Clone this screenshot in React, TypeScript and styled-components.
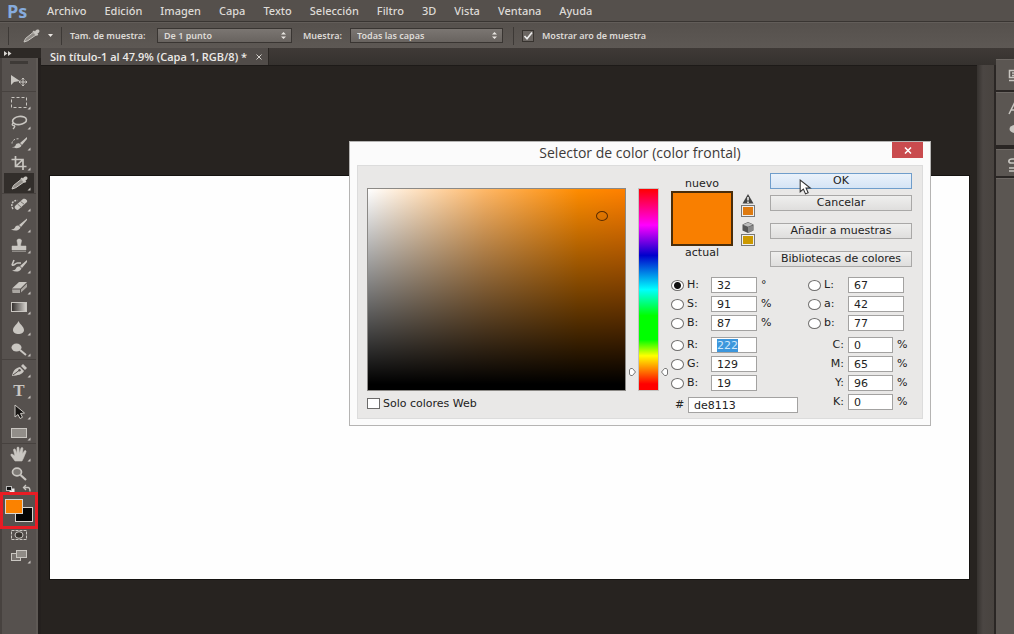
import React, { useEffect, useRef } from "react";
import styled, { createGlobalStyle, css } from "styled-components";

const ui = `"Noto Sans", "Open Sans", sans-serif`;
const titleFont = `"Open Sans", "Noto Sans", sans-serif`;
const dialogFont = `"DejaVu Sans", sans-serif`;

const GlobalStyle = createGlobalStyle`
  *, *::before, *::after { box-sizing: border-box; }
  body { margin: 0; background: #272320; }
  button, input, select { font: inherit; color: inherit; margin: 0; }
`;

const Screen = styled.div`
  position: relative;
  display: flex;
  flex-direction: column;
  min-height: 100vh;
  font-family: ${ui};
  color: #dedbd7;
  overflow: hidden;
`;

/* ---------- menu bar ---------- */

const MenuBar = styled.nav`
  display: flex;
  align-items: center;
  height: 22px;
  padding-left: 7px;
  background: #55504c;
  border-bottom: 1px solid #393532;
`;

const Logo = styled.span`
  width: 40px;
  font: 700 18px/20px ${titleFont};
  color: #86abdc;
`;

const MenuItems = styled.div`
  display: flex;
  gap: 18px;
`;

const MenuItem = styled.button`
  padding: 0;
  border: 0;
  background: none;
  font-size: 11px;
  font-weight: 500;
  line-height: 20px;
`;

/* ---------- options bar ---------- */

const OptionsBar = styled.div`
  display: flex;
  align-items: center;
  height: 26px;
  padding-left: 8px;
  background: linear-gradient(#56514d, #5d5854);
  border-top: 1px solid #625d59;
  font-size: 9px;
  font-weight: 600;
`;

const Divider = styled.span`
  width: 1px;
  height: 18px;
  background: #3d3936;
`;

const ToolPreset = styled.button`
  display: flex;
  align-items: center;
  gap: 8px;
  width: 52px;
  padding: 0 0 0 14px;
  border: 0;
  background: none;
`;

const OptionLabel = styled.label<{ $width: number }>`
  width: ${(p) => p.$width}px;
  padding-left: 8px;
  white-space: nowrap;
`;

const SelectBox = styled.span<{ $width: number }>`
  display: flex;
  align-items: center;
  width: ${(p) => p.$width}px;
  height: 15px;
  margin-right: 3px;
  padding-right: 4px;
  border: 1px solid #393532;
  background: linear-gradient(#7b7672, #68635f);
  select {
    flex: 1;
    min-width: 0;
    padding: 0 0 0 6px;
    border: 0;
    appearance: none;
    background: none;
    line-height: 12px;
  }
`;

const CheckOption = styled.label`
  display: flex;
  align-items: center;
  gap: 8px;
  padding-left: 7px;
`;

const DarkCheck = styled.input`
  appearance: none;
  width: 12px;
  height: 12px;
  border: 1px solid #37332f;
  background: #6b6662
    url("data:image/svg+xml,%3Csvg xmlns='http://www.w3.org/2000/svg' viewBox='0 0 10 10'%3E%3Cpath d='M1.5 5 4 7.8 9 1.5' fill='none' stroke='%23eee' stroke-width='1.6'/%3E%3C/svg%3E");
`;

/* ---------- work area ---------- */

const WorkArea = styled.div`
  flex: 1;
  display: flex;
`;

const ToolColumn = styled.aside`
  display: flex;
  flex-direction: column;
  width: 41px;
  background: #24201e;
`;

const Collapse = styled.button`
  display: block;
  height: 10px;
  padding: 0 0 0 4px;
  border: 0;
  background: #2d2926;
  svg { display: block; }
`;

const ToolPanel = styled.div`
  flex: 1;
  display: flex;
  flex-direction: column;
  width: 38px;
  background: #56514e;
  border-left: 2px solid #47423f;
  border-right: 2px solid #5e5955;
`;

const Grip = styled.div`
  height: 12px;
  padding: 3px 8px 0;
  &::before {
    content: "";
    display: block;
    height: 3px;
    background: #3e3a37;
  }
`;

const ToolGroup = styled.div<{ $height: number }>`
  display: flex;
  flex-direction: column;
  height: ${(p) => p.$height}px;
  & + & { border-top: 1px solid #47423f; }
`;

const ViewGroup = styled.div`
  display: flex;
  flex-direction: column;
  height: 42px;
  margin-top: -5px;
`;

const ToolButton = styled.button<{ $active?: boolean }>`
  flex: 1;
  display: flex;
  align-items: center;
  min-height: 0;
  margin: 0 2px;
  padding: 0 0 0 5px;
  border: 0;
  background: ${(p) => (p.$active ? "#322e2b" : "none")};
  svg { display: block; }
`;

const SwapRow = styled.div`
  display: flex;
  height: 8px;
  padding-left: 2px;
`;

const ColorFrame = styled.div`
  position: relative;
  width: 38px;
  height: 37px;
  margin-left: -2px;
  border: 3px solid #e81c24;
`;

const ColorChip = styled.button<{ $color: string; $back?: boolean }>`
  position: absolute;
  left: ${(p) => (p.$back ? 12 : 2)}px;
  top: ${(p) => (p.$back ? 12 : 4)}px;
  width: 18px;
  height: 15px;
  padding: 0;
  border: 1px solid #d9d5d0;
  background: ${(p) => p.$color};
`;

const Workspace = styled.main`
  flex: 1;
  display: flex;
  flex-direction: column;
  min-width: 0;
`;

const TabBar = styled.div`
  display: flex;
  height: 17px;
  background: linear-gradient(#3f3a37, #35312e);
`;

const Tab = styled.div`
  display: flex;
  align-items: center;
  gap: 9px;
  padding: 0 6px 0 9px;
  background: #514c49;
  border-right: 1px solid #2a2623;
  color: #eceae7;
  font: 600 11px/16px ${titleFont};
  white-space: nowrap;
`;

const TabClose = styled.button`
  padding: 0;
  border: 0;
  background: none;
  svg { display: block; }
`;

const Pasteboard = styled.div`
  flex: 1;
  display: flex;
  padding: 110px 8px 55px 9px;
  background: #272320;
  border-top: 1px solid #1d1a18;
`;

const Canvas = styled.div`
  flex: 1;
  background: #fefefe;
  outline: 1px solid #151311;
`;

const SideColumn = styled.aside`
  display: grid;
  grid-template-columns: 17px 18px;
  grid-template-rows: 17px 1fr;
  column-gap: 2px;
  background: #2a2624;
`;

const SideHead = styled.div`
  grid-column: 1 / -1;
  background: linear-gradient(#3f3a37, #35312e);
`;

const ScrollTrack = styled.div`
  background: linear-gradient(90deg, #36322f, #4b4643 6px, #48433f);
`;

const Panels = styled.div`
  display: flex;
  flex-direction: column;
  gap: 2px;
  margin-top: -6px;
`;

const PanelCard = styled.div<{ $height?: number; $gap?: number }>`
  ${(p) => (p.$height ? `height: ${p.$height}px;` : "flex: 1;")}
  margin-top: ${(p) => p.$gap || 0}px;
  padding: 8px 0 0 12px;
  background: #5b5652;
  border-top: 1px solid #6d6864;
  overflow: hidden;
  svg { display: block; }
`;

/* ---------- colour picker dialog ---------- */

const Dialog = styled.section`
  position: absolute;
  left: 349px;
  top: 141px;
  width: 582px;
  padding: 0 7px 6px;
  border: 1px solid #b5b4b3;
  background: #fbfbfb;
  color: #222;
  font-family: ${dialogFont};
  font-size: 11px;
  line-height: 14px;
`;

const TitleBar = styled.header`
  display: grid;
  grid-template-columns: 31px 1fr 31px;
  height: 23px;
  h1 {
    grid-column: 2;
    margin: 0;
    font: 400 14px/22px ${titleFont};
    text-align: center;
    color: #3d3a38;
  }
`;

const CloseButton = styled.button`
  display: grid;
  place-items: center;
  width: 31px;
  height: 16px;
  padding: 0;
  border: 0;
  background: #c94b4e;
`;

const DialogBody = styled.div`
  display: flex;
  gap: 12px;
  padding: 7px 10px 2px 9px;
  border: 1px solid #dcdcdc;
  background: #e9e8e7;
`;

const PickerColumn = styled.div`
  flex: 1;
  padding-top: 15px;
`;

const PickerRow = styled.div`
  display: flex;
  gap: 12px;
  height: 203px;
`;

const ShadeField = styled.div`
  position: relative;
  flex: 1;
  border: 1px solid #8b8986;
  background: linear-gradient(to top, #000 3%, transparent),
    linear-gradient(to right, #fff, #ffb868 45%, #ff8c00 82%, #ff8000);
`;

const ShadeMarker = styled.span`
  position: absolute;
  left: 228px;
  top: 22px;
  width: 12px;
  height: 10px;
  border: 1px solid #5a2c00;
  border-radius: 50%;
`;

const HueBar = styled.div`
  position: relative;
  width: 21px;
  border: 1px solid #c5c3c1;
  background: linear-gradient(#f00, #f0f 18%, #00c 33%, #0ff 50%, #0f0 63%, #0f0 75%, #ff0 83%, #f00 97%);
  svg {
    position: absolute;
    left: -12px;
    top: 178px;
  }
`;

const WebOnly = styled.label`
  display: flex;
  align-items: center;
  gap: 3px;
  height: 25px;
`;

const WebCheck = styled.input`
  appearance: none;
  width: 13px;
  height: 11px;
  border: 1px solid #6c6b6a;
  background: #fff;
`;

const DetailColumn = styled.div`
  width: 241px;
`;

const DetailTop = styled.div`
  display: flex;
  height: 104px;
`;

const Comparison = styled.div`
  display: flex;
  flex-direction: column;
  align-items: center;
  width: 62px;
  padding-top: 4px;
`;

const CompareSwatch = styled.div`
  align-self: stretch;
  height: 55px;
  border: 2px solid #4a2d0a;
  background: #f97f00;
`;

const Warnings = styled.div`
  display: flex;
  flex-direction: column;
  align-items: center;
  width: 30px;
  padding-top: 20px;
  svg { display: block; }
`;

const WarningChip = styled.button<{ $color: string }>`
  width: 14px;
  height: 12px;
  margin-bottom: 4px;
  padding: 0;
  border: 1px solid #777;
  background: ${(p) => p.$color};
  box-shadow: inset 0 0 0 1px #eee;
`;

const Actions = styled.div`
  display: flex;
  flex-direction: column;
  gap: 12px;
  flex: 1;
  margin-left: 7px;
`;

const ActionPair = styled.div`
  display: flex;
  flex-direction: column;
  gap: 6px;
`;

const ActionButton = styled.button<{ $primary?: boolean }>`
  height: 16px;
  padding: 0;
  border: 1px solid #a9a8a7;
  background: linear-gradient(#efefee, #dfdedd);
  line-height: 14px;
  ${(p) =>
    p.$primary &&
    css`
      border-color: #6f9dcb;
      background: linear-gradient(#eaf2fb, #d5e4f5);
    `}
`;

const Fields = styled.div`
  display: grid;
  grid-template-columns: 137px 1fr;
`;

const FieldColumn = styled.div`
  display: flex;
  flex-direction: column;
  gap: 6px;
`;

const FieldGroup = styled.div`
  display: flex;
  flex-direction: column;
  gap: 3px;
`;

const FieldRow = styled.div`
  display: flex;
  align-items: center;
  height: 16px;
`;

const RadioLabel = styled.label`
  display: flex;
  align-items: center;
  gap: 3px;
  width: 40px;
`;

const Radio = styled.input`
  flex: none;
  appearance: none;
  width: 13px;
  height: 11px;
  border: 1px solid #6f6e6d;
  border-radius: 50%;
  background: #fff;
  &:checked { background: radial-gradient(circle, #111 3px, #fff 4px); }
`;

const InkLabel = styled.label`
  width: 40px;
  padding-right: 4px;
  text-align: right;
`;

const HexLabel = styled.label`
  width: 17px;
  padding-left: 4px;
`;

const ValueInput = styled.input<{ $width: number }>`
  width: ${(p) => p.$width}px;
  height: 16px;
  padding: 1px 0 0 5px;
  border: 1px solid #a3a2a1;
  border-radius: 0;
  background: #fff;
  line-height: 13px;
  outline: none;
  &::selection { background: #3c96dc; color: #cfe8fb; }
`;

const Unit = styled.span`
  padding-left: 4px;
`;

const Pointer = styled.svg`
  position: absolute;
  left: 799px;
  top: 179px;
`;

/* ---------- drawings ---------- */

const ink = "#c9c6c1";

const toolArt: Record<string, React.ReactNode> = {
  move: (
    <>
      <path d="M2 3v10l3-3 6-1z" fill={ink} />
      <path d="M14 6v8M10 10h8M12.700 7.500 14 6l1.300 1.500M12.700 12.500 14 14l1.300-1.500M11.500 8.700 10 10l1.500 1.300M16.500 8.700 18 10l-1.500 1.300" stroke={ink} fill="none" />
    </>
  ),
  marquee: <rect x="2.500" y="4.500" width="15" height="10" fill="none" stroke={ink} strokeDasharray="3 2" />,
  lasso: (
    <>
      <ellipse cx="10.500" cy="7.500" rx="7" ry="4" transform="rotate(-8 10.500 7.500)" fill="none" stroke={ink} strokeWidth="1.600" />
      <path d="M5 10c-2 0-2.500 2.500-.5 2.500S6 14 4 16" fill="none" stroke={ink} strokeWidth="1.300" />
    </>
  ),
  quick: (
    <>
      <path d="M18 3 11 9l2 2 5-6zM10.500 9.500c-2-.5-3.500.5-4 2-.5 1-2 1.500-3.500 1.500 3 2 8.500 1.500 9.500-1.500z" fill={ink} />
      <path d="M3 9.500C3 6 7 4 11 5" fill="none" stroke={ink} strokeDasharray="2 1.500" />
    </>
  ),
  crop: <path d="M6.500 2v10.500h11M2.500 5.500h11.500V16M6.500 12.500l7.500-7" fill="none" stroke={ink} strokeWidth="1.700" />,
  eyedropper: (
    <>
      <path d="M11.500 4.500 13 3.500l1 1C15 2.500 17 2 18 3s.5 2.500-1.500 3.500l.8 1.200-1.500 1.300z" fill={ink} />
      <path d="m12 5.500-7.500 6L3 15l3.800-1.300L15 8z" fill="#8f8b86" stroke={ink} />
    </>
  ),
  heal: (
    <>
      <path d="m6 11 8-7c1.500-1 5 1 4 3l-8.500 7.500C8 16 4.500 13 6 11z" fill={ink} />
      <path d="m8.500 9 4 3.500M11.500 6.500l4 3" stroke="#77726e" />
      <path d="M4 14C1.500 10 3 5.500 8.500 5.500" fill="none" stroke={ink} strokeWidth="1.500" strokeDasharray="2 1" />
    </>
  ),
  brush: <path d="M18 2.500 10 9l2 2 6-7zM9.500 9.500c-2-.3-3 .7-3.500 2S4 13.500 2 13.500c3.500 2 8.500 1.300 9.500-2z" fill={ink} />,
  stamp: <path d="M8 3.500C8 1.500 12.500 1.500 12.500 3.500S11.500 6 11.700 9H17v4H3V9h5.700C9 6 8 5.500 8 3.500zM3 14.500h14" fill={ink} stroke={ink} strokeWidth=".5" />,
  history: (
    <>
      <path d="M18 3 11 9l2 2 5-6zM10.500 9.500c-2-.3-3 .7-3.500 2S5 13.500 3 13.500c3.500 2 8.500 1.300 9.500-2z" fill={ink} />
      <path d="M3 8c2 1.500 3-2 5.500-2H12M5 3 3 8" fill="none" stroke={ink} strokeWidth="1.600" />
    </>
  ),
  eraser: (
    <>
      <path d="M3 10.500 10 4h8l-6.500 6.500z" fill={ink} />
      <path d="M3 11.500h8V15H3.500zM12 11.500l6-6V9l-6 5.500z" fill="#aaa6a1" />
    </>
  ),
  gradient: <rect x="2.500" y="4.500" width="15" height="9" fill="url(#ramp)" stroke={ink} />,
  blur: <path d="M9.500 2c1 3 5.500 5.500 5.500 9 0 5.300-11 5.300-11 0 0-3.500 4.500-6 5.500-9z" fill={ink} />,
  dodge: (
    <>
      <ellipse cx="7.500" cy="7.500" rx="5" ry="4" fill={ink} />
      <path d="m11 10 6 5" stroke={ink} strokeWidth="2" />
    </>
  ),
  pen: (
    <>
      <path d="M3 15c1-5 3-8 8-9l4 4c-2 3.500-6 4.500-12 5zM12 5l2-2 4 4-2 2z" fill={ink} />
      <path d="m4 14 6-4.500" stroke="#56514e" />
      <circle cx="10.500" cy="9.300" r="1.200" fill="#56514e" />
    </>
  ),
  arrow: <path d="M6 2v12l3-2.500 2 4 2.500-1.200-2-3.800 4-.5z" fill="#171513" stroke={ink} />,
  shape: <rect x="2.500" y="4.500" width="15" height="9" fill="#928e89" stroke={ink} />,
  hand: <path d="M6 16 2 10.500c-.6-1.300.8-2 1.800-1L6 11 4.500 5c0-1.300 1.500-1.500 2-.3L8 8.500V3c0-1.300 2-1.300 2 0l.4 5.500L12 3.300c.4-1.200 2-.9 1.900.4l-.6 5.300 2-3c.8-1 2.200-.3 1.700.9L14.500 13 13 16z" fill={ink} stroke={ink} strokeWidth=".6" />,
  zoom: (
    <>
      <ellipse cx="8" cy="7" rx="4.500" ry="3.800" fill="#7d7975" stroke={ink} strokeWidth="1.700" />
      <path d="m11.500 10 5.500 5" stroke={ink} strokeWidth="2.200" />
    </>
  ),
  mask: (
    <>
      <path d="M2.500 4.500h15v9h-15z" fill="none" stroke={ink} strokeDasharray="3 1" />
      <ellipse cx="10" cy="9" rx="4" ry="3.300" fill="#37332f" stroke={ink} />
    </>
  ),
  screen: (
    <>
      <rect x="2.500" y="6.500" width="9" height="7" fill="#77726e" stroke={ink} />
      <rect x="7.500" y="3.500" width="10" height="7" fill="#8f8b86" stroke={ink} />
    </>
  ),
};

function ToolIcon({ name, more = true }: { name: string; more?: boolean }) {
  return (
    <svg width="24" height="18" viewBox="0 0 24 18">
      {name === "gradient" && (
        <defs>
          <linearGradient id="ramp">
            <stop offset="0" stopColor="#2f2b29" />
            <stop offset="1" stopColor="#d8d5d0" />
          </linearGradient>
        </defs>
      )}
      {name === "type" ? (
        <text x="10" y="14" textAnchor="middle" fontFamily="Liberation Serif, serif" fontSize="17" fontWeight="700" fill={ink}>T</text>
      ) : (
        toolArt[name]
      )}
      {more && <path d="M21.500 13.500v3h-3z" fill={ink} />}
    </svg>
  );
}

function Tool({ name, label, active, more }: { name: string; label: string; active?: boolean; more?: boolean }) {
  return (
    <ToolButton $active={active} aria-label={label} aria-pressed={!!active}>
      <ToolIcon name={name} more={more} />
    </ToolButton>
  );
}

const toolGroups: { height: number; tools: [string, string][] }[] = [
  { height: 21, tools: [["move", "Mover"]] },
  {
    height: 102,
    tools: [["marquee", "Marco"], ["lasso", "Lazo"], ["quick", "Selección rápida"], ["crop", "Recortar"], ["eyedropper", "Cuentagotas"]],
  },
  {
    height: 166,
    tools: [
      ["heal", "Pincel corrector"], ["brush", "Pincel"], ["stamp", "Tampón"], ["history", "Pincel de historia"],
      ["eraser", "Borrador"], ["gradient", "Degradado"], ["blur", "Desenfocar"], ["dodge", "Sobreexponer"],
    ],
  },
  { height: 84, tools: [["pen", "Pluma"], ["type", "Texto"], ["arrow", "Selección de trazado"], ["shape", "Rectángulo"]] },
  { height: 41, tools: [["hand", "Mano"], ["zoom", "Zoom"]] },
];

const menus = ["Archivo", "Edición", "Imagen", "Capa", "Texto", "Selección", "Filtro", "3D", "Vista", "Ventana", "Ayuda"];

function Stepper() {
  return (
    <svg width="7" height="9" viewBox="0 0 7 9">
      <path d="M1 3.500 3.500 1 6 3.500zM1 5.500 3.500 8 6 5.500z" fill="#e9e6e2" />
    </svg>
  );
}

function RadioField({ name, value, unit, width, checked, inputRef }: {
  name: string; value: string; unit?: string; width: number; checked?: boolean; inputRef?: React.Ref<HTMLInputElement>;
}) {
  return (
    <FieldRow>
      <RadioLabel>
        <Radio type="radio" name="component" defaultChecked={checked} />
        {name}:
      </RadioLabel>
      <ValueInput ref={inputRef} $width={width} defaultValue={value} aria-label={name} />
      {unit && <Unit>{unit}</Unit>}
    </FieldRow>
  );
}

function InkField({ name, value }: { name: string; value: string }) {
  const id = `ink-${name}`;
  return (
    <FieldRow>
      <InkLabel htmlFor={id}>{name}:</InkLabel>
      <ValueInput id={id} $width={45} defaultValue={value} />
      <Unit>%</Unit>
    </FieldRow>
  );
}

function ColorDialog() {
  const red = useRef<HTMLInputElement>(null);
  useEffect(() => {
    red.current?.focus();
    red.current?.select();
  }, []);
  return (
    <Dialog role="dialog" aria-labelledby="picker-title">
      <TitleBar>
        <h1 id="picker-title">Selector de color (color frontal)</h1>
        <CloseButton aria-label="Cerrar">
          <svg width="8" height="7" viewBox="0 0 8 7">
            <path d="m1 .5 6 6M7 .5l-6 6" stroke="#fff" strokeWidth="1.500" />
          </svg>
        </CloseButton>
      </TitleBar>
      <DialogBody>
        <PickerColumn>
          <PickerRow>
            <ShadeField><ShadeMarker /></ShadeField>
            <HueBar>
              <svg width="43" height="10" viewBox="0 0 43 10">
                <path d="M3.500 1.500h2L8.500 5l-3 3.500h-2L2.500 7V3zM39.500 1.500h-2L34.500 5l3 3.500h2l1-1.500V3z" fill="#fff" stroke="#777" />
              </svg>
            </HueBar>
          </PickerRow>
          <WebOnly>
            <WebCheck type="checkbox" />
            Solo colores Web
          </WebOnly>
        </PickerColumn>
        <DetailColumn>
          <DetailTop>
            <Comparison>
              <span>nuevo</span>
              <CompareSwatch />
              <span>actual</span>
            </Comparison>
            <Warnings>
              <svg width="14" height="12" viewBox="0 0 14 12">
                <path d="M7 1 12.500 10.500h-11z" fill="#444" />
                <path d="M7 4v3.500M7 8.500V10" stroke="#fff" strokeWidth="1.400" />
              </svg>
              <WarningChip $color="#de7a10" aria-label="Color imprimible más cercano" />
              <svg width="14" height="13" viewBox="0 0 14 13">
                <path d="m7 1 5.500 2.500v6L7 12 1.500 9.500v-6z" fill="#555" />
                <path d="m7 1.500 5 2.200-5 2.100-5-2.100z" fill="#bbb" />
                <path d="M7 6v6l5-2.500v-5z" fill="#888" />
              </svg>
              <WarningChip $color="#cc9900" aria-label="Color Web más cercano" />
            </Warnings>
            <Actions>
              <ActionPair>
                <ActionButton $primary>OK</ActionButton>
                <ActionButton>Cancelar</ActionButton>
              </ActionPair>
              <ActionButton>Añadir a muestras</ActionButton>
              <ActionButton>Bibliotecas de colores</ActionButton>
            </Actions>
          </DetailTop>
          <Fields>
            <FieldColumn>
              <FieldGroup>
                <RadioField name="H" value="32" unit="°" width={46} checked />
                <RadioField name="S" value="91" unit="%" width={46} />
                <RadioField name="B" value="87" unit="%" width={46} />
              </FieldGroup>
              <FieldGroup>
                <RadioField name="R" value="222" width={46} inputRef={red} />
                <RadioField name="G" value="129" width={46} />
                <RadioField name="B" value="19" width={46} />
              </FieldGroup>
              <FieldRow>
                <HexLabel htmlFor="hex">#</HexLabel>
                <ValueInput id="hex" $width={110} defaultValue="de8113" />
              </FieldRow>
            </FieldColumn>
            <FieldColumn>
              <FieldGroup>
                <RadioField name="L" value="67" width={56} />
                <RadioField name="a" value="42" width={56} />
                <RadioField name="b" value="77" width={56} />
              </FieldGroup>
              <FieldGroup>
                <InkField name="C" value="0" />
                <InkField name="M" value="65" />
                <InkField name="Y" value="96" />
                <InkField name="K" value="0" />
              </FieldGroup>
            </FieldColumn>
          </Fields>
        </DetailColumn>
      </DialogBody>
    </Dialog>
  );
}

export default function App() {
  return (
    <Screen>
      <GlobalStyle />
      <MenuBar>
        <Logo>Ps</Logo>
        <MenuItems>
          {menus.map((m) => <MenuItem key={m}>{m}</MenuItem>)}
        </MenuItems>
      </MenuBar>
      <OptionsBar>
        <Divider />
        <ToolPreset aria-label="Cuentagotas">
          <svg width="17" height="15" viewBox="2 1 17 15">{toolArt.eyedropper}</svg>
          <svg width="5" height="3" viewBox="0 0 5 3"><path d="M0 0h5L2.500 3z" fill="#e9e6e2" /></svg>
        </ToolPreset>
        <Divider />
        <OptionLabel htmlFor="sample-size" $width={95}>Tam. de muestra:</OptionLabel>
        <SelectBox $width={135}>
          <select id="sample-size"><option>De 1 punto</option></select>
          <Stepper />
        </SelectBox>
        <OptionLabel htmlFor="sample-layers" $width={55}>Muestra:</OptionLabel>
        <SelectBox $width={153}>
          <select id="sample-layers"><option>Todas las capas</option></select>
          <Stepper />
        </SelectBox>
        <CheckOption>
          <Divider />
          <DarkCheck type="checkbox" defaultChecked />
          Mostrar aro de muestra
        </CheckOption>
      </OptionsBar>
      <WorkArea>
        <ToolColumn>
          <Collapse aria-label="Expandir herramientas">
            <svg width="8" height="5" viewBox="0 0 8 5"><path d="m0 0 3.500 2.500L0 5zM4 0l3.500 2.500L4 5z" fill="#d9d6d2" /></svg>
          </Collapse>
          <ToolPanel>
            <Grip />
            {toolGroups.map((g) => (
              <ToolGroup key={g.height} $height={g.height}>
                {g.tools.map(([name, label]) => (
                  <Tool key={name} name={name} label={label} active={name === "eyedropper"} more={name !== "move" && name !== "zoom"} />
                ))}
              </ToolGroup>
            ))}
            <SwapRow>
              <svg width="30" height="9" viewBox="0 0 30 9">
                <rect x="5.500" y="4.500" width="5" height="4" fill="#eee" />
                <rect x="2.500" y="2.500" width="5" height="4" fill="#111" stroke="#bbb" />
                <path d="M20 3.500h4q2 0 2 4M22 1l-2.500 2.500L22 6" fill="none" stroke={ink} strokeWidth="1.300" />
              </svg>
            </SwapRow>
            <ColorFrame>
              <ColorChip $color="#050505" $back aria-label="Color de fondo" />
              <ColorChip $color="#fb8200" aria-label="Color frontal" />
            </ColorFrame>
            <ViewGroup>
              <Tool name="mask" label="Máscara rápida" more={false} />
              <Tool name="screen" label="Modo de pantalla" />
            </ViewGroup>
          </ToolPanel>
        </ToolColumn>
        <Workspace>
          <TabBar>
            <Tab>
              Sin título-1 al 47.9% (Capa 1, RGB/8) *
              <TabClose aria-label="Cerrar documento">
                <svg width="6" height="6" viewBox="0 0 6 6"><path d="m.5.5 5 5M5.500.5l-5 5" stroke="#d5d2ce" /></svg>
              </TabClose>
            </Tab>
          </TabBar>
          <Pasteboard><Canvas /></Pasteboard>
        </Workspace>
        <SideColumn>
          <SideHead />
          <ScrollTrack />
          <Panels>
            <PanelCard $height={31}>
              <svg width="12" height="16" viewBox="0 0 12 16"><path d="M1.500 2.500h9v7h-9zM4 5h6M4 7.500h6M1 12.500h10" fill="none" stroke={ink} strokeWidth="1.500" /></svg>
            </PanelCard>
            <PanelCard $height={53}>
              <svg width="12" height="40" viewBox="0 0 12 40"><path d="M1 13 6 3l5 10M3 9h6" fill="none" stroke={ink} strokeWidth="1.500" /><ellipse cx="7" cy="28" rx="5.500" ry="4" fill={ink} /></svg>
            </PanelCard>
            <PanelCard $height={27} $gap={2}>
              <svg width="12" height="16" viewBox="0 0 12 16"><path d="M10 1H4C0 1 0 5 3 5h4c4 0 4 5 0 5H1M1 13h10" fill="none" stroke={ink} strokeWidth="1.700" /></svg>
            </PanelCard>
            <PanelCard />
          </Panels>
        </SideColumn>
      </WorkArea>
      <ColorDialog />
      <Pointer width="13" height="17" viewBox="0 0 12 16" aria-hidden="true">
        <path d="M1 1v11l3-2.500 2 4.500 2.500-1-2-4.500h4z" fill="#fff" stroke="#333" />
      </Pointer>
    </Screen>
  );
}
